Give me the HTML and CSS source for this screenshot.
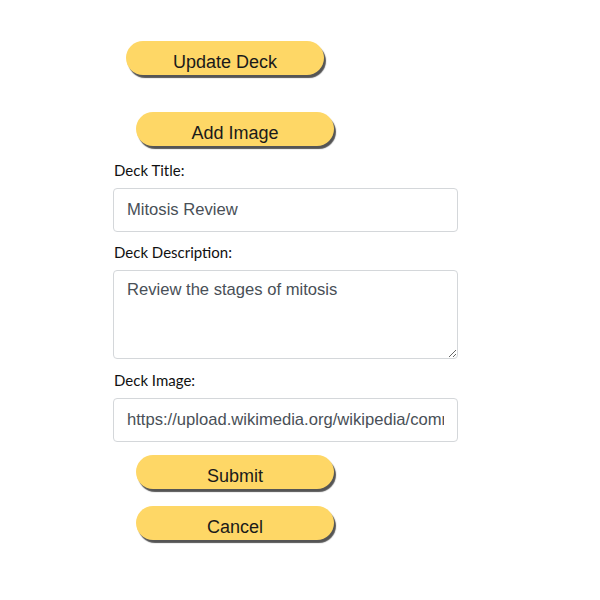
FILE: index.html
```html
<!DOCTYPE html>
<html>
<head>
<meta charset="utf-8">
<link rel="stylesheet" href="styles.css">
</head>
<body>
<div class="page">
  <div class="top">
    <button class="pill pill-update">Update Deck</button>
    <button class="pill pill-add">Add Image</button>
  </div>
  <form class="form">
    <label class="lbl">Deck Title:</label>
    <input class="field" type="text" value="Mitosis Review">
    <label class="lbl">Deck Description:</label>
    <textarea class="field area">Review the stages of mitosis</textarea>
    <label class="lbl">Deck Image:</label>
    <input class="field" type="text" value="https://upload.wikimedia.org/wikipedia/commons/mitosis.png">
    <div class="actions">
      <button type="button" class="pill">Submit</button>
      <button type="button" class="pill">Cancel</button>
    </div>
  </form>
</div>
</body>
</html>
```
FILE: styles.css
```css
html, body { margin: 0; padding: 0; background: #fff; }
.page { padding: 41px 0 40px 113px; width: 345px; }
.top { display: flex; flex-direction: column; align-items: flex-start; }
.pill {
  width: 198px; height: 34px;
  border: none; border-radius: 17px;
  background: #fed766;
  box-shadow: 2px 3px 1px #555;
  font-family: "Liberation Sans", Arial, sans-serif;
  font-size: 18px; color: #1a1a1a;
  padding: 8px 0 0 0;
  cursor: pointer;
}
.pill-update { margin-left: 13px; }
.pill-add { margin-left: 23px; margin-top: 37px; }
.form { display: flex; flex-direction: column; margin-top: 15px; }
.lbl {
  font-family: "Lato", "Open Sans", sans-serif;
  font-size: 15px; color: #111;
  margin: 0 0 9px 1px; line-height: 18px;
}
.field {
  box-sizing: border-box; width: 345px; height: 44px;
  border: 1px solid #d4d7da; border-radius: 4px;
  padding: 0 13px;
  font-family: "Liberation Sans", Arial, sans-serif;
  font-size: 16.6px; color: #495057;
  margin: 0 0 11px 0;
  background: #fff;
}
.area { height: 89px; padding-top: 9px; resize: vertical; line-height: 19px; margin-bottom: 12px; }
.actions { display: flex; flex-direction: column; gap: 17px; margin-left: 23px; margin-top: 2px; }
```
